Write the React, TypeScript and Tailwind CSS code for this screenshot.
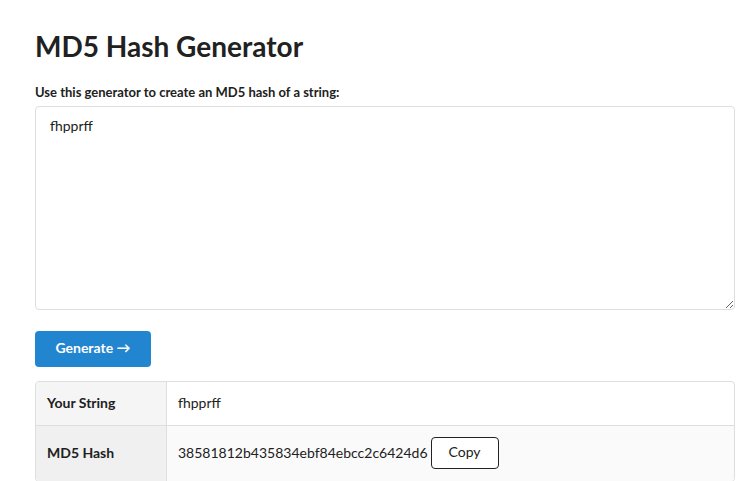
export default function App() {
  const input = 'fhpprff';
  const hash = '38581812b435834ebf84ebcc2c6424d6';

  return (
    <div className="min-h-screen bg-white font-['Lato','Liberation_Sans',sans-serif] text-[14px] text-[#212121]">
      <div className="pl-[35px] pr-[20px] pt-[28px]">
        <h1 className="text-[28px] font-bold leading-[1.29]">MD5 Hash Generator</h1>

        <label className="mt-[20px] block text-[13px] font-bold leading-[1.3]">
          Use this generator to create an MD5 hash of a string:
        </label>
        <textarea
          defaultValue={input}
          className="mt-[5px] block h-[204px] w-full resize-y rounded-[4px] border border-[#dedede] px-[14px] pb-[10px] pt-[9px] text-[14px] leading-[1.43] text-[#212121] outline-none"
        />

        <button className="mt-[21px] flex h-[36px] w-[116px] items-center justify-center rounded-[4px] bg-[#2185d0] pb-[3px] text-[14px] font-bold text-white">
          Generate →
        </button>

        <table className="mt-[14px] w-full border-separate border-spacing-0 overflow-hidden rounded-[4px] border border-[#dedede] text-left">
          <tbody>
            <tr className="h-[43px]">
              <th className="w-[131px] border-r border-[#dedede] bg-[#f5f5f5] px-[11px] pb-[3px] font-bold">
                Your String
              </th>
              <td className="px-[11px] pb-[3px]">{input}</td>
            </tr>
            <tr className="h-[56px]">
              <th className="border-r border-t border-[#dedede] bg-[#f0f0f0] px-[11px] pb-[3px] font-bold">
                MD5 Hash
              </th>
              <td className="border-t border-[#dedede] bg-[#fafafa] px-[11px] pb-[2px]">
                <div className="flex items-center gap-[3px]">
                  <span>{hash}</span>
                  <button className="h-[32px] w-[68px] rounded-[4px] border border-[#222] bg-white pb-[2px] text-[14px]">
                    Copy
                  </button>
                </div>
              </td>
            </tr>
          </tbody>
        </table>
      </div>
    </div>
  );
}
